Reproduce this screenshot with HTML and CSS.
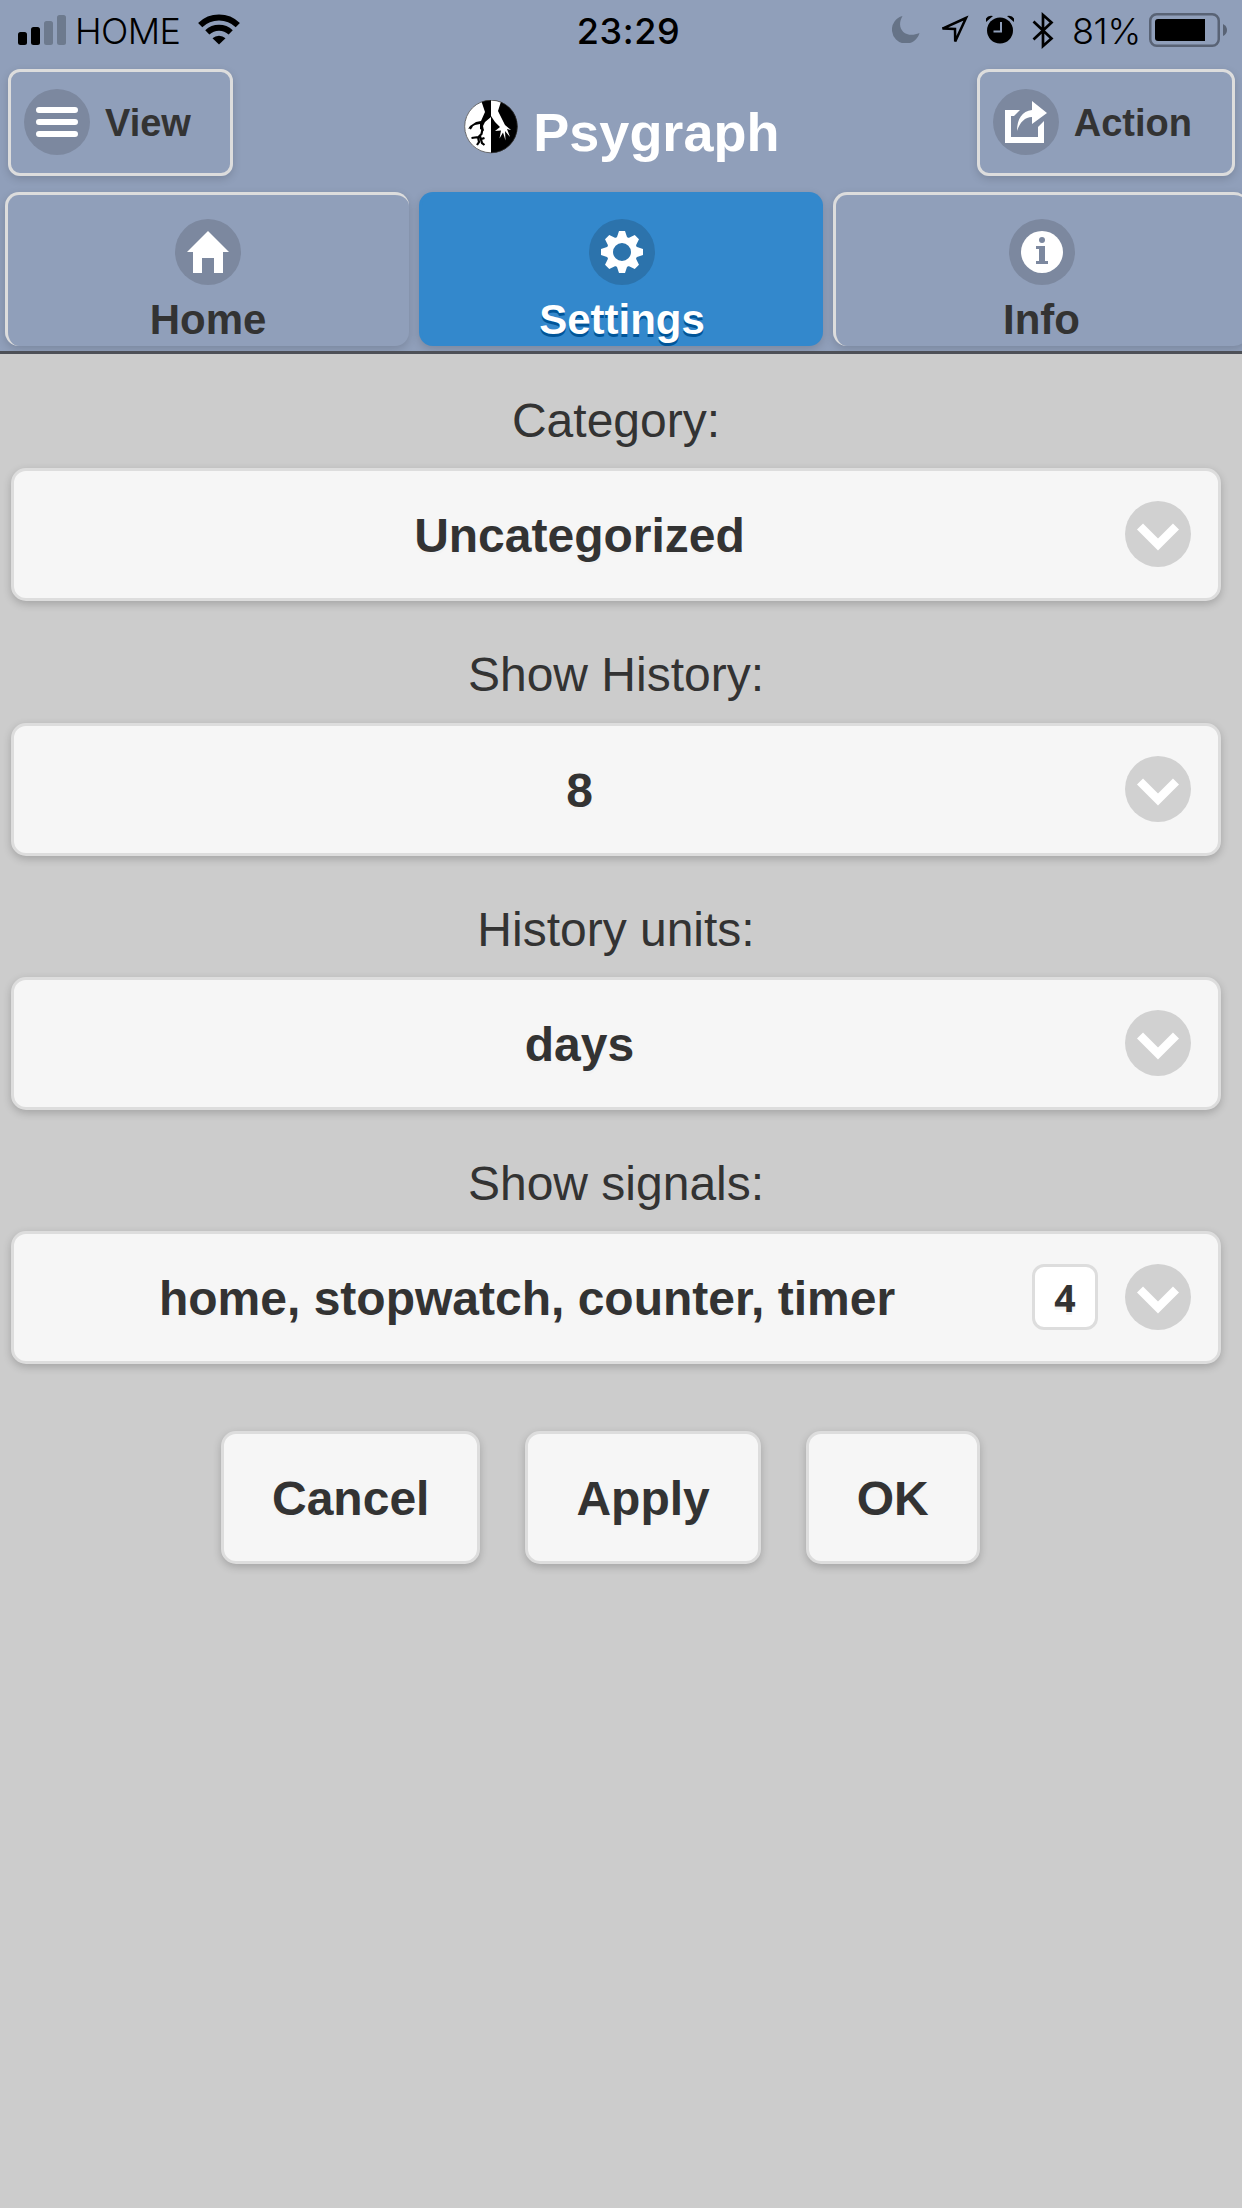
FILE: index.html
```html
<!DOCTYPE html>
<html lang="en">
<head>
<meta charset="utf-8">
<title>Psygraph</title>
<link rel="stylesheet" href="styles.css">
</head>
<body>
<header class="header">
  <div class="status">
    <div class="status-left">
      <svg class="signal" width="49" height="30" viewBox="0 0 49 30"><rect x="0" y="17" width="9" height="13" rx="2.5"/><rect x="13" y="12" width="9" height="18" rx="2.5"/><g fill="#6d7a8e"><rect x="26" y="6" width="9" height="24" rx="2.5"/><rect x="39" y="0" width="9" height="30" rx="2.5"/></g></svg>
      <span class="carrier">HOME</span>
      <svg class="wifi" width="42" height="31" viewBox="0 0 42 31"><g fill="none" stroke="#000" stroke-width="6"><path d="M2.2 11.200a27 27 0 0 1 37.600 0"/><path d="M9.300 18.400a17 17 0 0 1 23.400 0"/></g><path d="M14.500 24.300a9.600 9.600 0 0 1 13 0L21 30.500z"/></svg>
    </div>
    <span class="time">23:29</span>
    <div class="status-right">
      <svg class="moon" width="28" height="28" viewBox="0 0 28 28"><path fill="#667387" d="M10.500 1A14 14 0 1 0 27.500 18C14 24 3 14 10.500 1z"/></svg>
      <svg class="arrow" width="31" height="31" viewBox="0 0 31 31"><path fill="none" stroke="#000" stroke-width="2.500" d="M28 3 4.500 13.600l12.500.300.200 12.500z"/></svg>
      <svg class="alarm" width="28" height="29" viewBox="0 0 28 29"><circle cx="14" cy="15.500" r="13"/><path d="M0 7V3.500Q2 0 7 1zM28 7V3.500Q26 0 21 1z"/><path d="M15 7v9.500H7.500" fill="none" stroke="#909fba" stroke-width="2"/></svg>
      <svg class="bluetooth" width="22" height="38" viewBox="0 0 22 38"><path fill="none" stroke="#000" stroke-width="2.700" d="M1.500 9.500 19.500 26.500 11 34V3l8.500 7.500L1.500 27.500"/></svg>
      <span class="percent">81%</span>
      <svg class="battery" width="79" height="34" viewBox="0 0 79 34"><rect x="1.250" y="1.250" width="68.500" height="31.500" rx="6.500" fill="none" stroke="#596375" stroke-width="2.500"/><path d="M9 6h47v22H9q-3 0-3-3V9q0-3 3-3z"/><path fill="#596375" d="M74 11q4 2 4 6t-4 6z"/></svg>
    </div>
  </div>
  <div class="titlebar">
    <a class="btn-head"><svg class="disc" viewBox="0 0 66 66"><circle cx="33" cy="33" r="33"/><path stroke="#fff" stroke-width="6" stroke-linecap="round" d="M15 21h36M15 33h36M15 45h36"/></svg><span>View</span></a>
    <h1 class="title">
      <svg class="logo" width="54" height="54" viewBox="0 0 54 54"><defs><clipPath id="round"><circle cx="27" cy="26.500" r="26.500"/></clipPath></defs><g clip-path="url(#round)"><path fill="#fff" d="M0 0h27v54H0z"/><path d="M27 0h27v54H27z"/><path d="M17 0h10v17l-6 5-2 4 1 5-4-2 0-5-5 1-7 4 2-3 6-4 5-1 4-9z"/><path fill="none" stroke="#000" stroke-width="2.200" d="M18.500 29l-1 5-3 3-7 1M16 36l2 7 2.500 2M17.500 39l3-1M14 37l1 5-2 3M8 26l-2 3"/><path fill="#fff" d="M27 0h10.500l-3.500 11 7 14 6 5-4-1 3 8-5-6 .5 9.500-2.500-8-3.500 6 1.500-8-6 .5 5-4-5-5-4-6z"/></g><circle cx="27" cy="26.500" r="26.300" fill="none" stroke="#333" stroke-width=".7"/></svg>
      <span>Psygraph</span>
    </h1>
    <a class="btn-head"><svg class="disc" viewBox="0 0 66 66"><circle cx="33" cy="33" r="33"/><path fill="#fff" d="M12 21h15l-6 6h-3v21h27V38l6-6v22H12zM39 12l15 12-15 11v-7c-7 0-12 5-15 14 0-12 5-20 15-21z"/></svg><span>Action</span></a>
  </div>
  <nav class="tabs">
    <a class="tab"><svg class="disc" viewBox="0 0 66 66"><circle cx="33" cy="33" r="33"/><path fill="#fff" d="M33 12 54 33h-6v21h-9V39H27v15h-9V33h-6z"/></svg>Home</a>
    <a class="tab tab-active"><svg class="disc" viewBox="0 0 66 66"><circle cx="33" cy="33" r="33"/><g fill="#fff"><path id="tooth" d="M30 12h6l2 6 3 3H25l3-3z"/><use href="#tooth" transform="rotate(45 33 33)"/><use href="#tooth" transform="rotate(90 33 33)"/><use href="#tooth" transform="rotate(135 33 33)"/><use href="#tooth" transform="rotate(180 33 33)"/><use href="#tooth" transform="rotate(225 33 33)"/><use href="#tooth" transform="rotate(270 33 33)"/><use href="#tooth" transform="rotate(315 33 33)"/></g><circle class="ring" cx="33" cy="33" r="12"/></svg>Settings</a>
    <a class="tab"><svg class="disc" viewBox="0 0 66 66"><circle cx="33" cy="33" r="33"/><circle class="white" cx="33" cy="33" r="21"/><g fill="#7c889f"><circle class="dot" cx="33" cy="21" r="3"/><path d="M27 27h9v15h3v3H27v-3h3V30h-3z"/></g></svg>Info</a>
  </nav>
</header>
<main class="content">
  <label class="label">Category:</label>
  <div class="select"><span class="value">Uncategorized</span><svg class="chev" viewBox="0 0 66 66"><circle cx="33" cy="33" r="33"/><path d="M15 25.500 33 43.500 51 25.500"/></svg></div>
  <label class="label">Show History:</label>
  <div class="select"><span class="value">8</span><svg class="chev" viewBox="0 0 66 66"><circle cx="33" cy="33" r="33"/><path d="M15 25.500 33 43.500 51 25.500"/></svg></div>
  <label class="label">History units:</label>
  <div class="select"><span class="value">days</span><svg class="chev" viewBox="0 0 66 66"><circle cx="33" cy="33" r="33"/><path d="M15 25.500 33 43.500 51 25.500"/></svg></div>
  <label class="label">Show signals:</label>
  <div class="select select-multi"><span class="value">home, stopwatch, counter, timer</span><span class="count">4</span><svg class="chev" viewBox="0 0 66 66"><circle cx="33" cy="33" r="33"/><path d="M15 25.500 33 43.500 51 25.500"/></svg></div>
  <div class="actions"><button class="btn">Cancel</button><button class="btn">Apply</button><button class="btn">OK</button></div>
</main>
</body>
</html>
```
FILE: styles.css
```css
* { box-sizing: border-box; }
body {
  margin: 0;
  min-height: 2208px;
  background: #ccc;
  color: #333;
  font-family: "Liberation Sans", Arial, sans-serif;
  overflow-x: hidden;
}
svg { display: block; flex: none; }
.header {
  height: 354px;
  background: #909fba;
  border-bottom: 3px solid #4d5057;
  overflow: hidden;
}
.status {
  height: 69px;
  padding: 0 14px 0 18px;
  display: grid;
  grid-template-columns: 1fr auto 1fr;
  color: #000;
  font-family: Inter, sans-serif;
  font-size: 36px;
  line-height: 62px;
}
.status-left, .status-right { display: flex; align-items: flex-start; }
.status-right { justify-content: flex-end; }
.signal { margin-top: 15px; }
.carrier { margin-left: 8px; font-weight: 300; width: 108px; letter-spacing: -.6px; }
.wifi { margin-left: 15px; margin-top: 14px; }
.time { padding-left: 11px; font-weight: 500; letter-spacing: .6px; }
.moon { margin: 15px 18px 0 0; }
.arrow { margin: 15px 17px 0 0; }
.alarm { margin: 15px 18px 0 0; }
.bluetooth { margin: 12px 18px 0 0; }
.percent { font-weight: 300; width: 69px; letter-spacing: -.4px; }
.battery { margin: 13px 0 0 8px; }
.titlebar {
  height: 123px;
  padding: 0 7px 0 8px;
  display: flex;
  justify-content: space-between;
  align-items: flex-start;
}
.btn-head {
  height: 107px;
  padding: 0 39px 2px 13px;
  display: flex;
  align-items: center;
  gap: 15px;
  border: 3px solid #ddd;
  border-radius: 12px;
  box-shadow: 0 3px 9px rgba(0, 0, 0, .15);
  font-size: 38px;
  font-weight: 700;
}
.btn-head span { padding-top: 4px; }
.btn-head:last-child { padding-right: 40px; }
.disc { width: 66px; height: 66px; fill: none; }
.disc > circle { fill: #7c889f; }
.disc > .white { fill: #fff; }
.disc > .ring { fill: none; stroke: #fff; stroke-width: 6px; }
.title {
  margin: 30px 0 0 34px;
  display: flex;
  gap: 15px;
  color: #fff;
  font-size: 54px;
  line-height: 66px;
}
.logo { margin-top: 1px; }
.tabs { display: flex; gap: 10px; padding-left: 5px; }
.tab {
  flex: 0 0 404px;
  height: 154px;
  padding: 24px 1px 0 0;
  display: flex;
  flex-direction: column;
  align-items: center;
  gap: 11px;
  border: solid #ddd;
  border-width: 3px 0 0 3px;
  border-radius: 14px;
  box-shadow: 0 3px 9px rgba(0, 0, 0, .15);
  font-size: 42px;
  font-weight: 700;
  line-height: 48px;
}
.tab:last-child { flex-basis: 415px; }
.tab-active {
  background: #38c;
  border-color: #38c;
  color: #fff;
  text-shadow: 0 3px 0 #059;
}
.tab-active .disc > circle:first-child { fill: #2c73ac; }
.content { padding: 25px 21px 0 11px; }
.label {
  display: block;
  height: 89.330px;
  padding-top: 12px;
  text-align: center;
  font-size: 48px;
  line-height: 60px;
}
.select {
  height: 133px;
  margin-bottom: 32px;
  padding: 0 27px 1px;
  display: flex;
  align-items: center;
  background: #f6f6f6;
  border: 3px solid #ddd;
  border-radius: 15px;
  box-shadow: 0 3px 9px rgba(0, 0, 0, .2);
  font-size: 48px;
  font-weight: 700;
  text-shadow: 0 3px 0 #f3f3f3;
}
.value { flex: 1; padding: 4px 7px 0 0; text-align: center; line-height: 56px; }
.select-multi .value { padding-right: 19px; }
.chev { width: 66px; height: 66px; }
.chev circle { fill: #d1d1d1; }
.chev path { fill: none; stroke: #fff; stroke-width: 8.500px; }
.count {
  width: 66px;
  height: 66px;
  margin-right: 27px;
  background: #fff;
  border: 3px solid #ddd;
  border-radius: 12px;
  text-align: center;
  font-family: "Noto Sans", sans-serif;
  font-size: 37.500px;
  line-height: 61px;
}
.actions {
  display: flex;
  gap: 45px;
  padding: 35px 0 0 210px;
}
.btn {
  height: 133px;
  padding: 2px 48px 0;
  background: #f6f6f6;
  border: 3px solid #ddd;
  border-radius: 15px;
  box-shadow: 0 3px 9px rgba(0, 0, 0, .2);
  color: #333;
  font: 700 48px "Liberation Sans", Arial, sans-serif;
  text-shadow: 0 3px 0 #f3f3f3;
}
```
